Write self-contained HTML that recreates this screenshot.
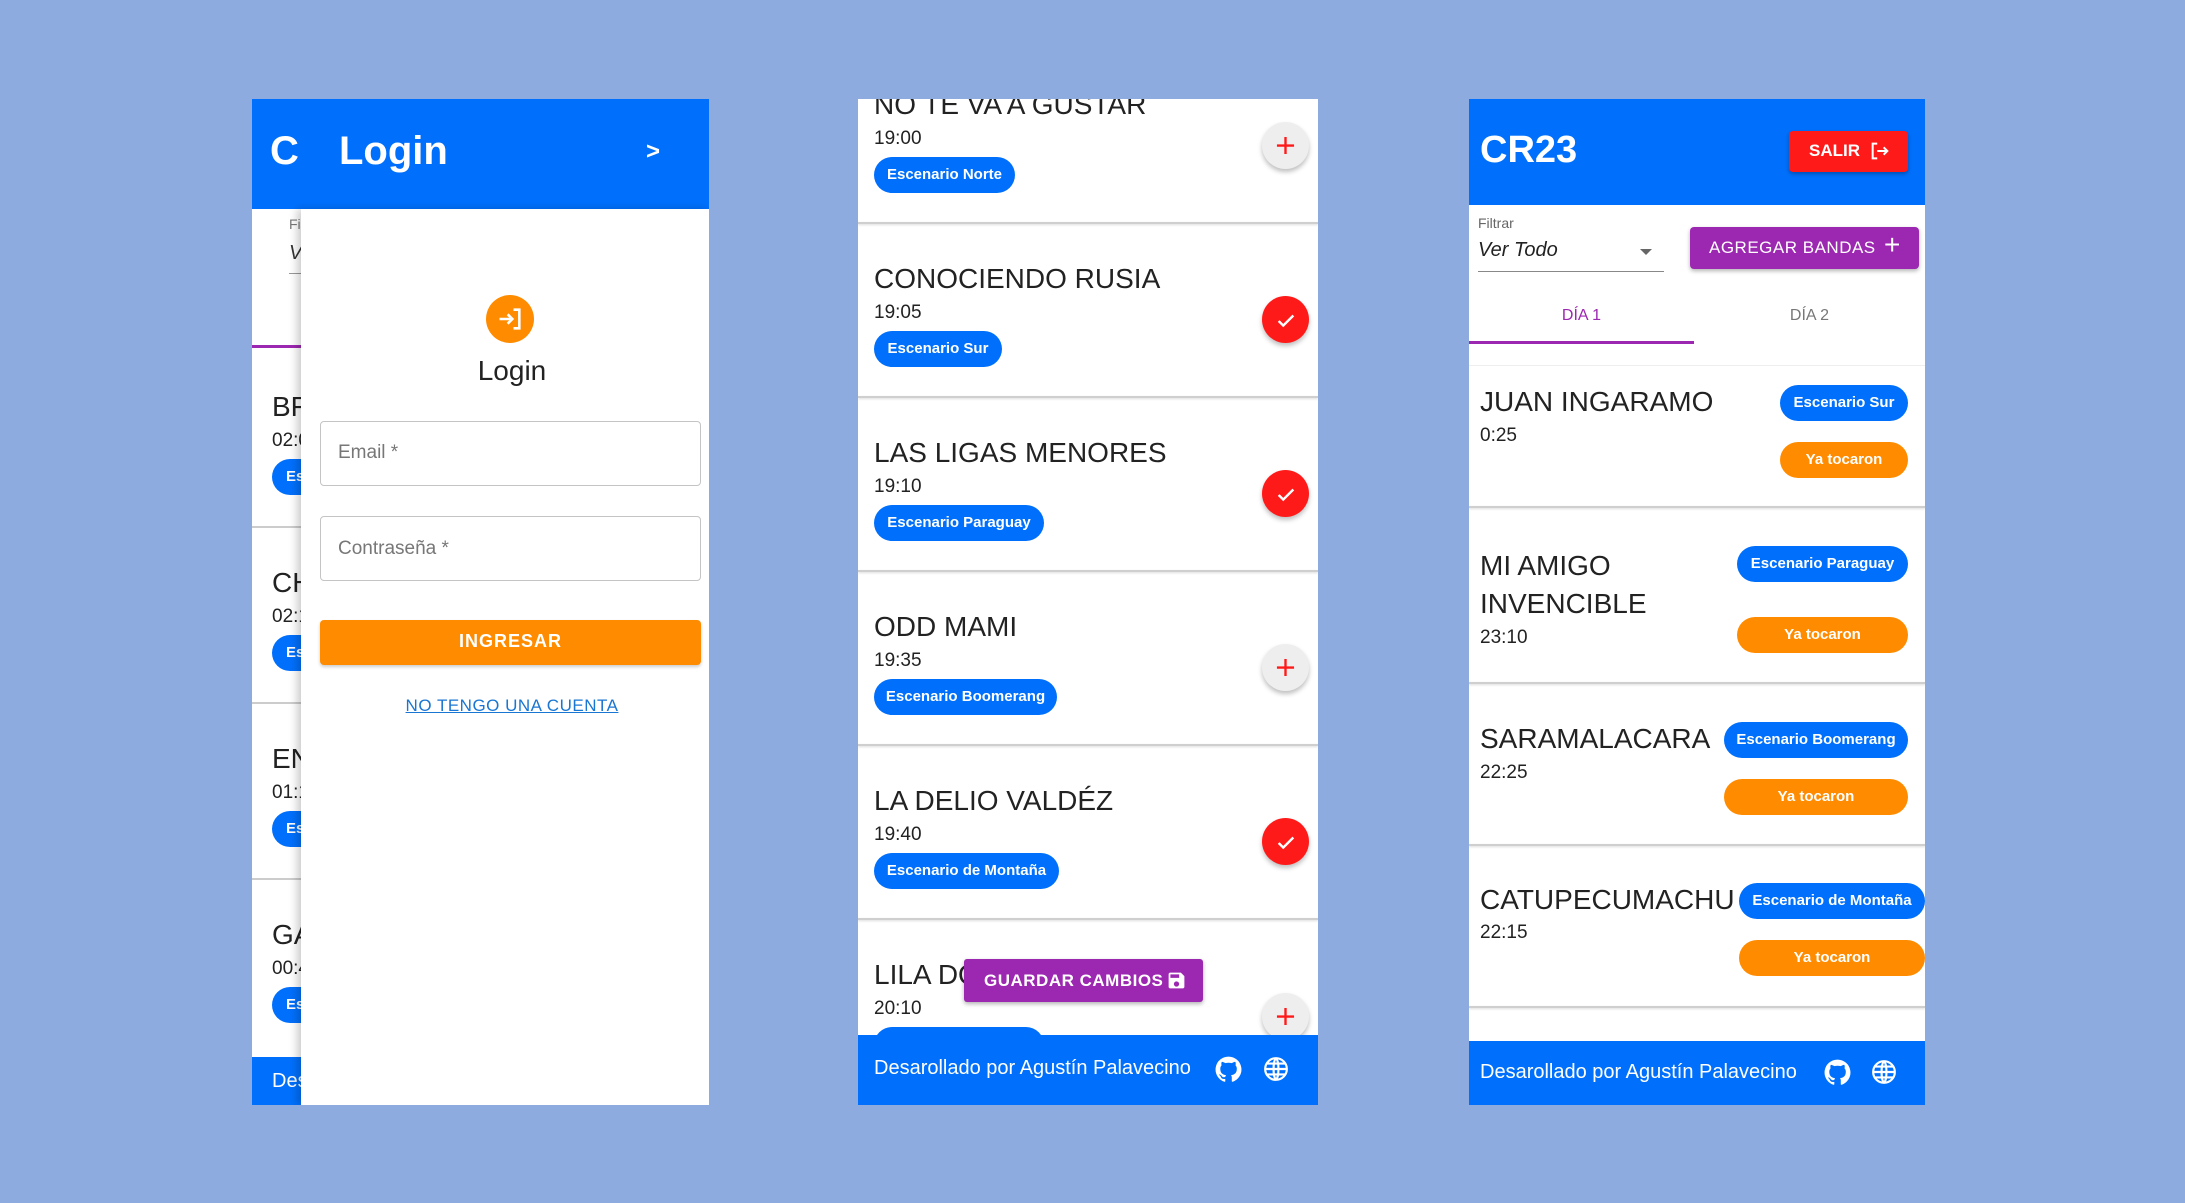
<!DOCTYPE html>
<html><head><meta charset="utf-8">
<style>
*{margin:0;padding:0;box-sizing:border-box}
body{width:2185px;height:1203px;background:#8eabe0;position:relative;overflow:hidden;font-family:"Liberation Sans",Arial,sans-serif;color:#222}
.a{position:absolute}
.panel{position:absolute;background:#fff;overflow:hidden}
.blue{background:#0070fc}
.chip{position:absolute;height:36px;border-radius:18px;background:#0070fc;color:#fff;font-size:15px;font-weight:bold;line-height:36px;text-align:center;white-space:nowrap}
.orange{background:#ff8c00}
.t{position:absolute;white-space:nowrap}
.sep{position:absolute;left:0;right:0;height:2px;background:#cfcfcf;box-shadow:0 1px 2px rgba(0,0,0,.15)}
.rb{position:absolute;width:47px;height:47px;border-radius:50%;box-shadow:0 3px 5px rgba(0,0,0,.25)}
.rb.p{background:#eeeeee}
.rb.c{background:#ff1a1a}
</style></head><body>

<!-- PANEL 1 -->
<div class="panel" style="left:252px;top:99px;width:457px;height:1006px">
  <div class="a blue" style="left:0;top:0;width:457px;height:110px"></div>
  <div class="t" style="left:18px;top:30px;color:#fff;font-size:40px;font-weight:bold">C</div>
  <div class="t" style="left:87px;top:30px;color:#fff;font-size:40px;font-weight:bold">Login</div>
  <div class="t" style="left:394px;top:39px;color:#fff;font-size:24px;font-weight:bold">&gt;</div>
  <div class="t" style="left:37px;top:117px;color:#777;font-size:14px">Fi</div>
  <div class="t" style="left:37px;top:143px;color:#333;font-size:20px;font-style:italic">V</div>
  <div class="a" style="left:37px;top:174px;width:12px;height:1px;background:#999"></div>
  <div class="a" style="left:0;top:246px;width:49px;height:3px;background:#9c27b0"></div>
  <div class="t" style="left:20px;top:292px;font-size:28px">BF</div>
  <div class="t" style="left:20px;top:331px;font-size:19px">02:0</div>
  <div class="chip" style="left:20px;top:360px;width:60px;text-align:left;padding-left:14px">Es</div>
  <div class="a" style="left:0;top:427px;width:49px;height:2px;background:#ccc"></div>
  <div class="t" style="left:20px;top:468px;font-size:28px">CH</div>
  <div class="t" style="left:20px;top:507px;font-size:19px">02:1</div>
  <div class="chip" style="left:20px;top:536px;width:60px;text-align:left;padding-left:14px">Es</div>
  <div class="a" style="left:0;top:603px;width:49px;height:2px;background:#ccc"></div>
  <div class="t" style="left:20px;top:644px;font-size:28px">EN</div>
  <div class="t" style="left:20px;top:683px;font-size:19px">01:1</div>
  <div class="chip" style="left:20px;top:712px;width:60px;text-align:left;padding-left:14px">Es</div>
  <div class="a" style="left:0;top:779px;width:49px;height:2px;background:#ccc"></div>
  <div class="t" style="left:20px;top:820px;font-size:28px">GA</div>
  <div class="t" style="left:20px;top:859px;font-size:19px">00:4</div>
  <div class="chip" style="left:20px;top:888px;width:60px;text-align:left;padding-left:14px">Es</div>
  <div class="a blue" style="left:0;top:958px;width:49px;height:48px"></div>
  <div class="t" style="left:20px;top:971px;color:#fff;font-size:20px">Des</div>
  <div class="a" style="left:49px;top:110px;width:408px;height:896px;background:#fff;box-shadow:-4px 0 8px rgba(0,0,0,.2)"></div>
  <div class="a" style="left:234px;top:196px;width:48px;height:48px;border-radius:50%;background:#ff8c00"></div>
  <svg class="a" style="left:244px;top:206px" width="28" height="28" viewBox="0 0 24 24" fill="none" stroke="#fff" stroke-width="2.2"><path d="M3 12h11M10 8l4 4-4 4M15 4h5v16h-5"/></svg>
  <div class="t" style="left:56px;width:408px;text-align:center;top:256px;font-size:28px;color:#222">Login</div>
  <div class="a" style="left:68px;top:322px;width:381px;height:65px;border:1px solid #c4c4c4;border-radius:4px"></div>
  <div class="t" style="left:86px;top:343px;font-size:19px;color:#777">Email *</div>
  <div class="a" style="left:68px;top:417px;width:381px;height:65px;border:1px solid #c4c4c4;border-radius:4px"></div>
  <div class="t" style="left:86px;top:439px;font-size:19px;color:#777">Contraseña *</div>
  <div class="a" style="left:68px;top:521px;width:381px;height:45px;border-radius:4px;background:#ff8c00;box-shadow:0 2px 3px rgba(0,0,0,.2)"></div>
  <div class="t" style="left:68px;width:381px;text-align:center;top:532px;font-size:18px;font-weight:bold;color:#fff;letter-spacing:1px">INGRESAR</div>
  <div class="t" style="left:56px;width:408px;text-align:center;top:597px;font-size:17px;color:#1976d2;text-decoration:underline;letter-spacing:.5px">NO TENGO UNA CUENTA</div>
</div>

<!-- PANEL 2 -->
<div class="panel" style="left:858px;top:99px;width:460px;height:1006px">
  <div class="t" style="left:16px;top:-10px;font-size:28px">NO TE VA A GUSTAR</div>
  <div class="t" style="left:16px;top:29px;font-size:19px">19:00</div>
  <div class="chip" style="left:16px;top:58px;width:141px">Escenario Norte</div>
  <div class="rb p" style="left:404px;top:23px"></div>
  <div class="sep" style="top:123px"></div>

  <div class="t" style="left:16px;top:164px;font-size:28px">CONOCIENDO RUSIA</div>
  <div class="t" style="left:16px;top:203px;font-size:19px">19:05</div>
  <div class="chip" style="left:16px;top:232px;width:128px">Escenario Sur</div>
  <div class="rb c" style="left:404px;top:197px"></div>
  <div class="sep" style="top:297px"></div>

  <div class="t" style="left:16px;top:338px;font-size:28px">LAS LIGAS MENORES</div>
  <div class="t" style="left:16px;top:377px;font-size:19px">19:10</div>
  <div class="chip" style="left:16px;top:406px;width:170px">Escenario Paraguay</div>
  <div class="rb c" style="left:404px;top:371px"></div>
  <div class="sep" style="top:471px"></div>

  <div class="t" style="left:16px;top:512px;font-size:28px">ODD MAMI</div>
  <div class="t" style="left:16px;top:551px;font-size:19px">19:35</div>
  <div class="chip" style="left:16px;top:580px;width:183px">Escenario Boomerang</div>
  <div class="rb p" style="left:404px;top:545px"></div>
  <div class="sep" style="top:645px"></div>

  <div class="t" style="left:16px;top:686px;font-size:28px">LA DELIO VALDÉZ</div>
  <div class="t" style="left:16px;top:725px;font-size:19px">19:40</div>
  <div class="chip" style="left:16px;top:754px;width:185px">Escenario de Montaña</div>
  <div class="rb c" style="left:404px;top:719px"></div>
  <div class="sep" style="top:819px"></div>

  <div class="t" style="left:16px;top:860px;font-size:28px">LILA DOWNS</div>
  <div class="t" style="left:16px;top:899px;font-size:19px">20:10</div>
  <div class="chip" style="left:16px;top:928px;width:170px"></div>
  <div class="rb p" style="left:404px;top:894px"></div>
  <div class="a" style="left:106px;top:860px;width:239px;height:43px;background:#9c27b0;border-radius:3px;box-shadow:0 2px 4px rgba(0,0,0,.3)"></div>
  <div class="t" style="left:126px;top:872px;font-size:17px;font-weight:bold;color:#fff;letter-spacing:.5px">GUARDAR CAMBIOS</div>
  <svg class="a" style="left:308px;top:871px" width="21" height="21" viewBox="0 0 24 24" fill="#fff"><path d="M17 3H5a2 2 0 0 0-2 2v14a2 2 0 0 0 2 2h14a2 2 0 0 0 2-2V7l-4-4zm-5 16a3 3 0 1 1 0-6 3 3 0 0 1 0 6zm3-10H5V5h10v4z"/></svg>
  <div class="a blue" style="left:0;top:936px;width:460px;height:70px"></div>
  <div class="t" style="left:16px;top:958px;font-size:20px;color:#fff">Desarollado por Agustín Palavecino</div>
  <svg class="a" style="left:357px;top:957px" width="27" height="27" viewBox="0 0 24 24" fill="#fff"><path d="M12 .5a11.5 11.5 0 0 0-3.64 22.41c.58.1.79-.25.79-.56v-2c-3.2.7-3.88-1.54-3.88-1.54-.52-1.33-1.28-1.69-1.28-1.69-1.05-.71.08-.7.08-.7 1.16.08 1.77 1.19 1.77 1.19 1.03 1.77 2.7 1.26 3.36.96.1-.75.4-1.26.73-1.55-2.55-.29-5.24-1.28-5.24-5.68 0-1.26.45-2.28 1.19-3.09-.12-.29-.52-1.46.11-3.05 0 0 .97-.31 3.170 1.18a11 11 0 0 1 5.77 0c2.2-1.49 3.17-1.18 3.17-1.18.63 1.59.23 2.76.11 3.05.74.81 1.19 1.83 1.19 3.09 0 4.41-2.69 5.38-5.25 5.67.41.36.78 1.06.78 2.14v3.17c0 .31.21.67.8.56A11.5 11.5 0 0 0 12 .5z"/></svg>
  <svg class="a" style="left:405px;top:957px" width="26" height="26" viewBox="0 0 24 24" fill="none" stroke="#fff" stroke-width="2"><circle cx="12" cy="12" r="10"/><path d="M2 12h20M12 2c3 3 3 17 0 20M12 2c-3 3-3 17 0 20M4 7h16M4 17h16"/></svg>
</div>
<svg class="a" style="left:1276px;top:136px" width="19" height="19" viewBox="0 0 20 20" stroke="#ff1a1a" stroke-width="2.5"><path d="M10 1v18M1 10h18"/></svg>
<svg class="a" style="left:1276px;top:658px" width="19" height="19" viewBox="0 0 20 20" stroke="#ff1a1a" stroke-width="2.5"><path d="M10 1v18M1 10h18"/></svg>
<svg class="a" style="left:1276px;top:1007px" width="19" height="19" viewBox="0 0 20 20" stroke="#ff1a1a" stroke-width="2.5"><path d="M10 1v18M1 10h18"/></svg>
<svg class="a" style="left:1275px;top:310px" width="22" height="22" viewBox="0 0 24 24" fill="none" stroke="#fff" stroke-width="2.6"><path d="M4 12l5 5L20 6"/></svg>
<svg class="a" style="left:1275px;top:484px" width="22" height="22" viewBox="0 0 24 24" fill="none" stroke="#fff" stroke-width="2.6"><path d="M4 12l5 5L20 6"/></svg>
<svg class="a" style="left:1275px;top:832px" width="22" height="22" viewBox="0 0 24 24" fill="none" stroke="#fff" stroke-width="2.6"><path d="M4 12l5 5L20 6"/></svg>

<!-- PANEL 3 -->
<div class="panel" style="left:1469px;top:99px;width:456px;height:1006px">
  <div class="a blue" style="left:0;top:0;width:456px;height:106px"></div>
  <div class="t" style="left:11px;top:30px;color:#fff;font-size:38px;font-weight:bold">CR23</div>
  <div class="a" style="left:320px;top:32px;width:119px;height:41px;background:#ff1a1a;border-radius:4px;box-shadow:0 2px 4px rgba(0,0,0,.3)"></div>
  <div class="t" style="left:340px;top:42px;color:#fff;font-size:17px;font-weight:bold">SALIR</div>
  <svg class="a" style="left:400px;top:41px" width="22" height="22" viewBox="0 0 24 24" fill="none" stroke="#fff" stroke-width="2.2"><path d="M9 4H4v16h5M9 12h11M16 8l4 4-4 4"/></svg>
  <div class="t" style="left:9px;top:116px;font-size:14px;color:#666">Filtrar</div>
  <div class="t" style="left:9px;top:140px;font-size:20px;font-style:italic;color:#222">Ver Todo</div>
  <div class="a" style="left:171px;top:150px;width:0;height:0;border-left:6px solid transparent;border-right:6px solid transparent;border-top:6px solid #666"></div>
  <div class="a" style="left:9px;top:172px;width:186px;height:1px;background:#888"></div>
  <div class="a" style="left:221px;top:128px;width:229px;height:42px;background:#9c27b0;border-radius:4px;box-shadow:0 2px 4px rgba(0,0,0,.3)"></div>
  <div class="t" style="left:240px;top:139px;color:#fff;font-size:17px;letter-spacing:.5px">AGREGAR BANDAS</div>
  <div class="t" style="left:415px;top:131px;color:#fff;font-size:28px;line-height:30px">+</div>
  <div class="t" style="left:0;width:225px;text-align:center;top:208px;font-size:16px;color:#9c27b0">DÍA 1</div>
  <div class="t" style="left:225px;width:231px;text-align:center;top:208px;font-size:16px;color:#777">DÍA 2</div>
  <div class="a" style="left:0;top:242px;width:225px;height:3px;background:#9c27b0"></div>
  <div class="a" style="left:0;top:266px;width:456px;height:1px;background:#eee"></div>

  <div class="t" style="left:11px;top:287px;font-size:28px">JUAN INGARAMO</div>
  <div class="t" style="left:11px;top:326px;font-size:19px">0:25</div>
  <div class="chip" style="left:311px;top:286px;width:128px">Escenario Sur</div>
  <div class="chip orange" style="left:311px;top:343px;width:128px">Ya tocaron</div>
  <div class="sep" style="top:407px"></div>

  <div class="t" style="left:11px;top:448px;font-size:28px;line-height:38px">MI AMIGO<br>INVENCIBLE</div>
  <div class="t" style="left:11px;top:528px;font-size:19px">23:10</div>
  <div class="chip" style="left:268px;top:447px;width:171px">Escenario Paraguay</div>
  <div class="chip orange" style="left:268px;top:518px;width:171px">Ya tocaron</div>
  <div class="sep" style="top:583px"></div>

  <div class="t" style="left:11px;top:624px;font-size:28px">SARAMALACARA</div>
  <div class="t" style="left:11px;top:663px;font-size:19px">22:25</div>
  <div class="chip" style="left:255px;top:623px;width:184px">Escenario Boomerang</div>
  <div class="chip orange" style="left:255px;top:680px;width:184px">Ya tocaron</div>
  <div class="sep" style="top:745px"></div>

  <div class="t" style="left:11px;top:785px;font-size:28px">CATUPECUMACHU</div>
  <div class="t" style="left:11px;top:823px;font-size:19px">22:15</div>
  <div class="chip" style="left:270px;top:784px;width:186px">Escenario de Montaña</div>
  <div class="chip orange" style="left:270px;top:841px;width:186px">Ya tocaron</div>
  <div class="sep" style="top:907px"></div>

  <div class="a blue" style="left:0;top:942px;width:456px;height:64px"></div>
  <div class="t" style="left:11px;top:962px;font-size:20px;color:#fff">Desarollado por Agustín Palavecino</div>
  <svg class="a" style="left:355px;top:960px" width="27" height="27" viewBox="0 0 24 24" fill="#fff"><path d="M12 .5a11.5 11.5 0 0 0-3.64 22.41c.58.1.79-.25.79-.56v-2c-3.2.7-3.88-1.54-3.88-1.54-.52-1.33-1.28-1.69-1.28-1.69-1.05-.71.08-.7.08-.7 1.16.08 1.77 1.19 1.77 1.19 1.03 1.77 2.7 1.26 3.36.96.1-.75.4-1.26.73-1.55-2.55-.29-5.24-1.28-5.24-5.68 0-1.26.45-2.28 1.19-3.09-.12-.29-.52-1.46.11-3.05 0 0 .97-.31 3.17 1.18a11 11 0 0 1 5.77 0c2.2-1.49 3.17-1.18 3.17-1.18.63 1.59.23 2.76.11 3.05.74.81 1.19 1.83 1.19 3.09 0 4.41-2.69 5.38-5.25 5.67.41.36.78 1.06.78 2.14v3.17c0 .31.21.67.8.56A11.5 11.5 0 0 0 12 .5z"/></svg>
  <svg class="a" style="left:402px;top:960px" width="26" height="26" viewBox="0 0 24 24" fill="none" stroke="#fff" stroke-width="2"><circle cx="12" cy="12" r="10"/><path d="M2 12h20M12 2c3 3 3 17 0 20M12 2c-3 3-3 17 0 20M4 7h16M4 17h16"/></svg>
</div>
</body></html>
